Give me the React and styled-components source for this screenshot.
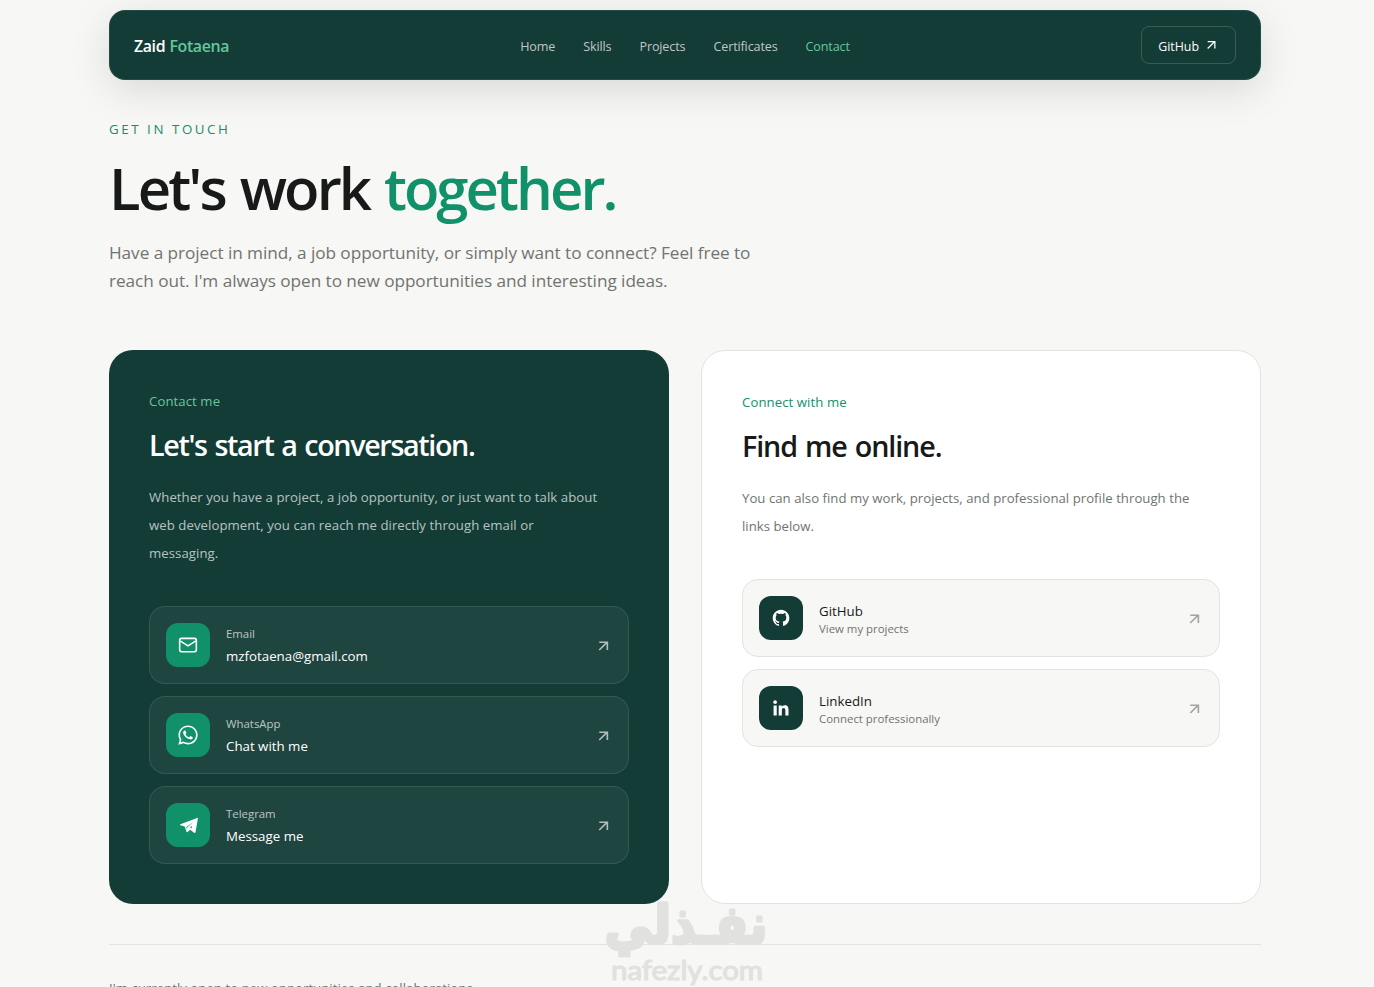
import React from "react";
import styled, { createGlobalStyle, css } from "styled-components";
import { FaWhatsapp } from "react-icons/fa";
import { BiLogoGithub, BiLogoLinkedin } from "react-icons/bi";

const color = {
  page: "#f7f7f5",
  forest: "#133c36",
  accent: "#10916a",
  mint: "#66c79a",
  ink: "#171a19",
  muted: "#70746f",
  line: "#e2e4e1",
};

const GlobalStyle = createGlobalStyle`
  * { box-sizing: border-box; }
  body {
    margin: 0;
    background: ${color.page};
    color: ${color.ink};
    font-family: "Open Sans", "Noto Sans", sans-serif;
  }
  h1, h2, p { margin: 0; }
  a { color: inherit; text-decoration: none; }
`;

const Page = styled.div`
  position: relative;
  height: 987px;
  overflow: hidden;
  padding: 10px 113px 0 109px;
`;

const Header = styled.header`
  display: grid;
  grid-template-columns: 1fr auto 1fr;
  align-items: center;
  height: 70px;
  padding: 0 24px;
  border: 1px solid rgba(255, 255, 255, 0.08);
  border-radius: 16px;
  background: ${color.forest};
  box-shadow: 0 10px 40px rgba(0, 0, 0, 0.12);
`;

const Brand = styled.a`
  padding-top: 1px;
  font-size: 15.9px;
  font-weight: 600;
  line-height: 20px;
  letter-spacing: -0.38px;
  word-spacing: 0.6px;
  color: #fff;
  span { color: ${color.mint}; }
`;

const Nav = styled.nav`
  display: flex;
  gap: 28px;
  padding-top: 3px;
`;

const NavLink = styled.a`
  font-size: 12.6px;
  line-height: 20px;
  letter-spacing: -0.14px;
  color: ${({ $active }) => ($active ? color.mint : "rgba(255, 255, 255, 0.72)")};
`;

const HeaderButton = styled.a`
  display: flex;
  align-items: center;
  justify-self: end;
  gap: 4px;
  height: 38px;
  padding: 0 16px;
  border: 1px solid rgba(255, 255, 255, 0.16);
  border-radius: 8px;
  font-size: 12.4px;
  font-weight: 500;
  line-height: 20px;
  color: #fff;
  span { padding-top: 3px; }
`;

const Intro = styled.section`
  padding-top: 39px;
`;

const Eyebrow = styled.p`
  font-size: 13.3px;
  line-height: 20px;
  letter-spacing: 2.57px;
  color: ${color.accent};
`;

const Headline = styled.h1`
  margin-top: 19px;
  font-size: 58px;
  font-weight: 600;
  line-height: 60px;
  letter-spacing: -2.85px;
  word-spacing: 2.5px;
  white-space: nowrap;
  span {
    color: ${color.accent};
    letter-spacing: -2.95px;
  }
`;

const Lead = styled.p`
  width: 672px;
  margin-top: 21px;
  font-size: 17.2px;
  line-height: 28px;
  letter-spacing: -0.05px;
  color: ${color.muted};
`;

const Columns = styled.section`
  display: grid;
  grid-template-columns: 1fr 1fr;
  gap: 32px;
  height: 554px;
  margin-top: 55px;
`;

const cardTone = {
  dark: css`
    background: ${color.forest};
    --label: ${color.mint};
    --title: #fff;
    --body: rgba(255, 255, 255, 0.7);
    --title-spacing: -1.35px;
    --body-spacing: 0.06px;
  `,
  light: css`
    background: #fff;
    border: 1px solid ${color.line};
    --label: ${color.accent};
    --title: ${color.ink};
    --body: ${color.muted};
    --title-spacing: -1.1px;
    --body-spacing: 0.02px;
  `,
};

const Card = styled.article`
  padding: 41px 40px 40px;
  border-radius: 24px;
  ${({ $tone }) => cardTone[$tone]}
`;

const CardLabel = styled.p`
  font-size: 13.2px;
  line-height: 20px;
  letter-spacing: 0.07px;
  color: var(--label);
`;

const CardTitle = styled.h2`
  margin-top: 16px;
  font-size: 28.7px;
  font-weight: 600;
  line-height: 36px;
  letter-spacing: var(--title-spacing);
  word-spacing: 1.7px;
  color: var(--title);
`;

const CardText = styled.p`
  max-width: 450px;
  margin-top: 20px;
  font-size: 13.2px;
  line-height: 28px;
  letter-spacing: var(--body-spacing);
  color: var(--body);
`;

const LinkList = styled.div`
  display: flex;
  flex-direction: column;
  gap: 12px;
  margin-top: 39px;
`;

const rowTone = {
  dark: css`
    background: rgba(255, 255, 255, 0.05);
    border-color: rgba(255, 255, 255, 0.1);
    --tile: ${color.accent};
    --arrow: rgba(255, 255, 255, 0.65);
  `,
  light: css`
    background: ${color.page};
    border-color: ${color.line};
    --tile: ${color.forest};
    --arrow: #a2a5a2;
  `,
};

const LinkRow = styled.a`
  display: flex;
  align-items: center;
  gap: 16px;
  height: 78px;
  padding: 0 16px;
  border: 1px solid;
  border-radius: 16px;
  ${({ $tone }) => rowTone[$tone]}
`;

const IconTile = styled.span`
  display: grid;
  place-items: center;
  flex: none;
  width: 44px;
  height: 44px;
  border-radius: 12px;
  background: var(--tile);
  color: #fff;
`;

const RowText = styled.span`
  display: flex;
  flex: 1;
  flex-direction: column;
  gap: ${({ $gap }) => $gap}px;
  padding-top: 2px;
`;

const Small = styled.span`
  font-size: 11.4px;
  line-height: 16px;
  color: var(--body);
`;

const Strong = styled.span`
  font-size: 13.3px;
  font-weight: ${({ $weight }) => $weight};
  line-height: 20px;
  color: var(--title);
`;

const RowArrow = styled.span`
  display: flex;
  padding-top: 1px;
  color: var(--arrow);
`;

const Footer = styled.footer`
  margin-top: 40px;
  padding-top: 33px;
  border-top: 1px solid ${color.line};
  font-size: 13.2px;
  line-height: 20px;
  letter-spacing: 0.03px;
  color: ${color.muted};
`;

const Watermark = styled.svg`
  position: absolute;
  left: 600px;
  top: 898px;
  color: #e1e1e0;
`;

function Arrow({ size = 18, weight = 2.2 }) {
  return (
    <svg width={size} height={size} viewBox="0 0 24 24" fill="none" stroke="currentColor" strokeWidth={weight}>
      <path d="M7 17.3 17.6 6.8M7 7h10.8v10.3" />
    </svg>
  );
}

function MailIcon() {
  return (
    <svg width="20" height="20" viewBox="0 0 24 24" fill="none" stroke="currentColor" strokeWidth="1.9" strokeLinejoin="round">
      <rect x="2" y="4" width="20" height="16" rx="2.2" />
      <path d="m2.6 7 9.4 6 9.4-6" />
    </svg>
  );
}

function TelegramIcon() {
  return (
    <svg width="22" height="22" viewBox="0 0 22 22" fill="currentColor" fillRule="evenodd">
      <path d="M20.2 3.9 3.4 10.2c-.6.3-.6.8 0 1l4.3 1.4 1.8 5.2c.2.5.7.5 1.1.2l2.5-2.2 4.1 2.9c.6.4 1.1.2 1.3-.5L20.9 4.6c.1-.6-.2-.9-.7-.7ZM16.4 7.9l-7 5.2.5 2.3.5-2.1ZM15 12.2l-.4 2-2-1Z" />
    </svg>
  );
}

const navItems = ["Home", "Skills", "Projects", "Certificates", "Contact"];

const contacts = [
  { label: "Email", value: "mzfotaena@gmail.com", icon: <MailIcon /> },
  { label: "WhatsApp", value: "Chat with me", icon: <FaWhatsapp size={22} /> },
  { label: "Telegram", value: "Message me", icon: <TelegramIcon /> },
];

const profiles = [
  { name: "GitHub", note: "View my projects", icon: <BiLogoGithub size={20} /> },
  { name: "LinkedIn", note: "Connect professionally", icon: <BiLogoLinkedin size={20} /> },
];

export default function App() {
  return (
    <Page>
      <GlobalStyle />
      <Header>
        <Brand>
          Zaid <span>Fotaena</span>
        </Brand>
        <Nav>
          {navItems.map((item) => (
            <NavLink key={item} $active={item === "Contact"}>
              {item}
            </NavLink>
          ))}
        </Nav>
        <HeaderButton>
          <span>GitHub</span>
          <Arrow size={16} weight={1.9} />
        </HeaderButton>
      </Header>

      <Intro>
        <Eyebrow>GET IN TOUCH</Eyebrow>
        <Headline>
          Let's work <span>together.</span>
        </Headline>
        <Lead>
          Have a project in mind, a job opportunity, or simply want to connect? Feel free to reach out. I'm always
          open to new opportunities and interesting ideas.
        </Lead>
      </Intro>

      <Columns>
        <Card $tone="dark">
          <CardLabel>Contact me</CardLabel>
          <CardTitle>Let's start a conversation.</CardTitle>
          <CardText>
            Whether you have a project, a job opportunity, or just want to talk about web development, you can reach
            me directly through email or messaging.
          </CardText>
          <LinkList>
            {contacts.map((c) => (
              <LinkRow key={c.label} $tone="dark">
                <IconTile>{c.icon}</IconTile>
                <RowText $gap={4}>
                  <Small>{c.label}</Small>
                  <Strong $weight={500}>{c.value}</Strong>
                </RowText>
                <RowArrow>
                  <Arrow />
                </RowArrow>
              </LinkRow>
            ))}
          </LinkList>
        </Card>

        <Card $tone="light">
          <CardLabel>Connect with me</CardLabel>
          <CardTitle>Find me online.</CardTitle>
          <CardText>
            You can also find my work, projects, and professional profile through the links below.
          </CardText>
          <LinkList>
            {profiles.map((p) => (
              <LinkRow key={p.name} $tone="light">
                <IconTile>{p.icon}</IconTile>
                <RowText $gap={0}>
                  <Strong $weight={400}>{p.name}</Strong>
                  <Small>{p.note}</Small>
                </RowText>
                <RowArrow>
                  <Arrow />
                </RowArrow>
              </LinkRow>
            ))}
          </LinkList>
        </Card>
      </Columns>

      <Footer>I'm currently open to new opportunities and collaborations.</Footer>

      <Watermark width="176" height="89" viewBox="0 0 176 89" fill="currentColor" stroke="currentColor" strokeLinejoin="round">
        <text
          x="86"
          y="45"
          textAnchor="middle"
          fontFamily="DejaVu Sans, sans-serif"
          fontWeight="700"
          fontSize="53"
          strokeWidth="3.2"
          textLength="163"
          lengthAdjust="spacingAndGlyphs"
          direction="rtl"
        >
          نفـذلي
        </text>
        <text
          x="11"
          y="82"
          fontFamily="Lato, sans-serif"
          fontWeight="400"
          fontSize="26"
          strokeWidth="1"
          textLength="152"
          lengthAdjust="spacingAndGlyphs"
        >
          nafezly.com
        </text>
      </Watermark>
    </Page>
  );
}
